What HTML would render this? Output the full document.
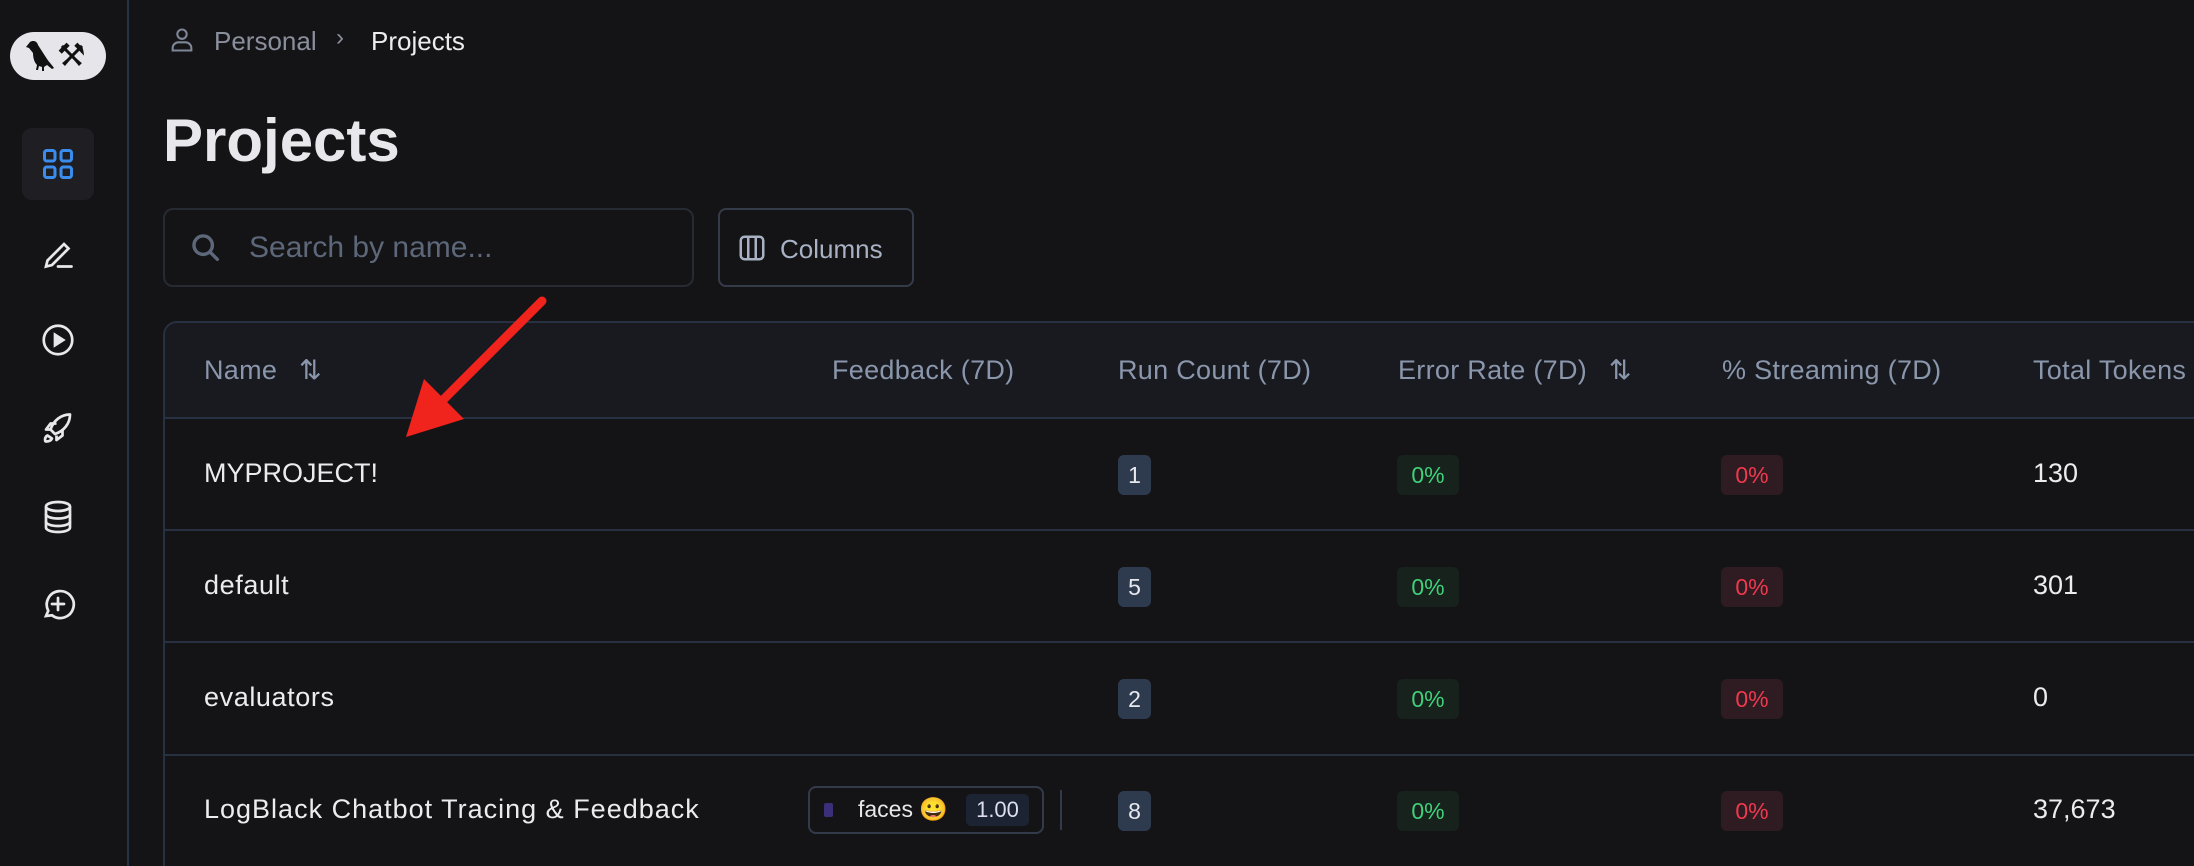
<!DOCTYPE html>
<html><head><meta charset="utf-8"><style>
*{margin:0;padding:0;box-sizing:border-box}
html,body{width:2194px;height:866px;overflow:hidden}
body{background:#141416;font-family:"Liberation Sans",sans-serif;color:#e8e8ec;position:relative}
.abs{position:absolute}
.side{left:0;top:0;width:129px;height:866px;border-right:2px solid #263245}
.ic{position:absolute;left:40px;width:36px;height:36px}
.t{position:absolute;white-space:nowrap}
.hdr{color:#8a96ab;font-size:27px;top:355px;letter-spacing:0.3px}
.cell{font-size:27px;color:#ececf0}
.badge{position:absolute;height:40px;border-radius:6px;font-size:23px;line-height:40px;text-align:center}
.rc{background:#2e3a4e;color:#e6e8ee;width:33px}
.gr{background:#17221c;color:#3fd17a;width:62px}
.rd{background:#2e1c22;color:#f0384e;width:62px}
.hl{position:absolute;left:165px;right:0;height:2px;background:#283142}
</style></head><body>
<div class="abs side"></div>
<div class="abs" style="left:10px;top:32px;width:96px;height:48px;border-radius:24px;background:#e6e6ea"></div>
<svg class="abs" style="left:24px;top:38px;width:34px;height:36px" viewBox="0 0 34 36"><path d="M6 4c3-2 7-1 8 3l9 14c2 3 5 6 7 9l-2 1-5-4-3 2 0 4-2 0 0-4-3-1-1 4-2 0 1-5c-3-3-4-8-4-12L5 10 2 9z" fill="#111"/></svg>
<div class="t" style="left:57px;top:36px;font-size:32px;color:#111">⚒</div>
<div class="abs" style="left:22px;top:128px;width:72px;height:72px;border-radius:10px;background:#1f1f23"></div>
<svg class="ic" style="top:146px" viewBox="0 0 24 24" fill="none" stroke="#3b8ded" stroke-width="2"><rect x="3" y="3" width="7" height="7" rx="1.5"/><rect x="14" y="3" width="7" height="7" rx="1.5"/><rect x="3" y="14" width="7" height="7" rx="1.5"/><rect x="14" y="14" width="7" height="7" rx="1.5"/></svg>
<svg class="ic" style="top:235px" viewBox="0 0 24 24" fill="none" stroke="#e8e8ec" stroke-width="1.8" stroke-linecap="round"><path d="M4 21l1-4L16 6l3 3L8 20z"/><path d="M12 21h9"/></svg>
<svg class="ic" style="top:322px" viewBox="0 0 24 24" fill="none" stroke="#e8e8ec" stroke-width="1.8"><circle cx="12" cy="12" r="9.5"/><path d="M10 8.5v7l5.5-3.5z" fill="#e8e8ec"/></svg>
<svg class="ic" style="top:410px" viewBox="0 0 24 24" fill="none" stroke="#e8e8ec" stroke-width="1.8" stroke-linejoin="round"><path d="M9 15l-2-2c2-6 7-10 13-10 0 6-4 11-10 13z"/><path d="M7 13l-3 0 3-4 4 0"/><path d="M11 17v3l4-3v-4"/><path d="M5 17c-2 1-2 4-1 4s3 0 4-2z"/></svg>
<svg class="ic" style="top:499px" viewBox="0 0 24 24" fill="none" stroke="#e8e8ec" stroke-width="1.8"><ellipse cx="12" cy="5" rx="8" ry="3"/><path d="M4 5v14c0 1.7 3.6 3 8 3s8-1.3 8-3V5"/><path d="M4 10c0 1.7 3.6 3 8 3s8-1.3 8-3M4 15c0 1.7 3.6 3 8 3s8-1.3 8-3"/></svg>
<svg class="ic" style="top:586px" viewBox="0 0 24 24" fill="none" stroke="#e8e8ec" stroke-width="1.8" stroke-linecap="round"><path d="M4 20l1.5-3.5A9 9 0 1 1 8 19.5z"/><path d="M12 8v8M8 12h8"/></svg>

<svg class="abs" style="left:168px;top:26px;width:28px;height:28px" viewBox="0 0 24 24" fill="none" stroke="#7d8596" stroke-width="1.8"><circle cx="12" cy="7" r="4"/><path d="M4 21v-2a5 5 0 0 1 5-5h6a5 5 0 0 1 5 5v2z"/></svg>
<div class="t" style="left:214px;top:26px;font-size:26px;color:#8a8f9c">Personal</div>
<div class="t" style="left:336px;top:24px;font-size:24px;color:#8a8f9c">›</div>
<div class="t" style="left:371px;top:26px;font-size:26px;color:#ececf0">Projects</div>
<div class="t" style="left:163px;top:106px;font-size:60px;font-weight:bold;color:#e8e8ec">Projects</div>

<div class="abs" style="left:163px;top:208px;width:531px;height:79px;border:2px solid #262a33;border-radius:10px"></div>
<svg class="abs" style="left:189px;top:231px;width:34px;height:34px" viewBox="0 0 24 24" fill="none" stroke="#5d687a" stroke-width="2.4" stroke-linecap="round"><circle cx="10" cy="10" r="6.5"/><path d="M15 15l5 5"/></svg>
<div class="t" style="left:249px;top:231px;font-size:30px;color:#5d677a">Search by name...</div>
<div class="abs" style="left:718px;top:208px;width:196px;height:79px;border:2px solid #343c4a;border-radius:8px"></div>
<svg class="abs" style="left:737px;top:233px;width:30px;height:30px" viewBox="0 0 24 24" fill="none" stroke="#a8b2c4" stroke-width="2"><rect x="3" y="3" width="18" height="18" rx="3"/><path d="M9 3v18M15 3v18"/></svg>
<div class="t" style="left:780px;top:234px;font-size:26px;color:#a8b2c4">Columns</div>

<div class="abs" style="left:163px;top:321px;width:2100px;height:545px;border:2px solid #283142;border-bottom:none;border-radius:14px 14px 0 0"></div>
<div class="abs" style="left:165px;top:323px;width:2040px;height:94px;background:#181a20;border-top-left-radius:12px"></div>
<div class="hl" style="top:417px"></div>
<div class="hl" style="top:529px"></div>
<div class="hl" style="top:641px"></div>
<div class="hl" style="top:754px"></div>

<div class="t hdr" style="left:204px">Name <span style="margin-left:14px">⇅</span></div>
<div class="t hdr" style="left:832px">Feedback (7D)</div>
<div class="t hdr" style="left:1118px">Run Count (7D)</div>
<div class="t hdr" style="left:1398px">Error Rate (7D) <span style="margin-left:14px">⇅</span></div>
<div class="t hdr" style="left:1722px">% Streaming (7D)</div>
<div class="t hdr" style="left:2033px">Total Tokens</div>

<div class="t cell" style="left:204px;top:458px">MYPROJECT!</div>
<div class="badge rc" style="left:1118px;top:455px">1</div>
<div class="badge gr" style="left:1397px;top:455px">0%</div>
<div class="badge rd" style="left:1721px;top:455px">0%</div>
<div class="t cell" style="left:2033px;top:458px">130</div>

<div class="t cell" style="left:204px;top:570px;letter-spacing:0.6px">default</div>
<div class="badge rc" style="left:1118px;top:567px">5</div>
<div class="badge gr" style="left:1397px;top:567px">0%</div>
<div class="badge rd" style="left:1721px;top:567px">0%</div>
<div class="t cell" style="left:2033px;top:570px">301</div>

<div class="t cell" style="left:204px;top:682px;letter-spacing:0.6px">evaluators</div>
<div class="badge rc" style="left:1118px;top:679px">2</div>
<div class="badge gr" style="left:1397px;top:679px">0%</div>
<div class="badge rd" style="left:1721px;top:679px">0%</div>
<div class="t cell" style="left:2033px;top:682px">0</div>

<div class="t cell" style="left:204px;top:794px;letter-spacing:1px">LogBlack Chatbot Tracing &amp; Feedback</div>
<div class="abs" style="left:808px;top:786px;width:236px;height:48px;border:2px solid #333b4a;border-radius:8px"></div>
<div class="abs" style="left:824px;top:803px;width:9px;height:14px;border-radius:2px;background:#3c2f7a"></div>
<div class="t" style="left:858px;top:796px;font-size:23px;color:#e8e8ec">faces 😀</div>
<div class="abs" style="left:966px;top:794px;width:63px;height:32px;border-radius:5px;background:#1c2433;color:#dde;font-size:22px;line-height:32px;text-align:center">1.00</div>
<div class="abs" style="left:1060px;top:790px;width:2px;height:40px;background:#333b4a"></div>
<div class="badge rc" style="left:1118px;top:791px">8</div>
<div class="badge gr" style="left:1397px;top:791px">0%</div>
<div class="badge rd" style="left:1721px;top:791px">0%</div>
<div class="t cell" style="left:2033px;top:794px">37,673</div>

<svg class="abs" style="left:0;top:0;width:2194px;height:866px" viewBox="0 0 2194 866"><path d="M542 301L440 403" stroke="#f0231d" stroke-width="9" stroke-linecap="round"/><path d="M406 437l18-58 40 40z" fill="#f0231d"/></svg>
</body></html>
